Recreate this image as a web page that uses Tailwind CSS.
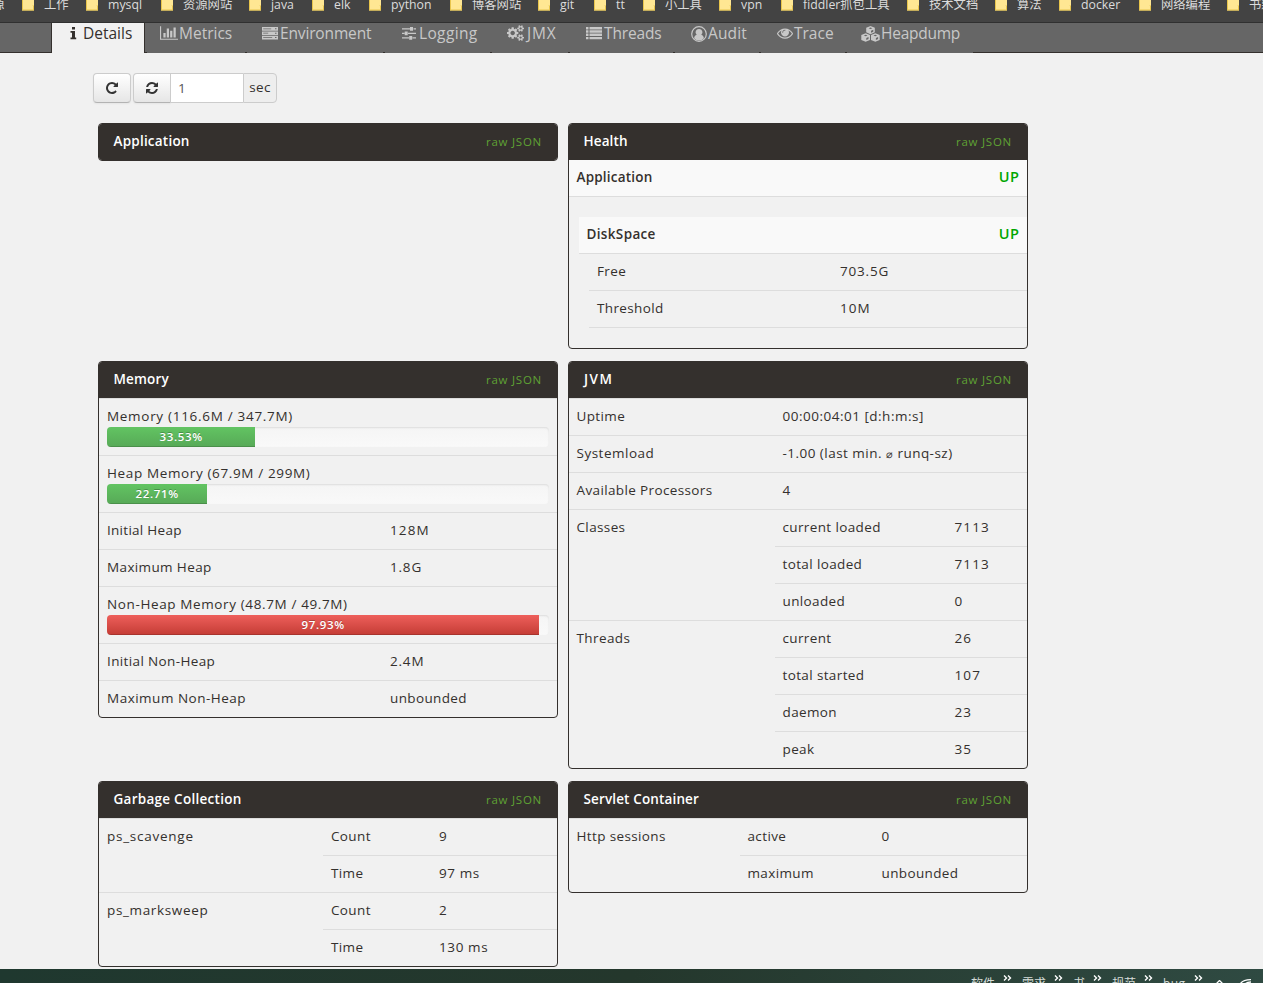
<!DOCTYPE html>
<html lang="en">
<head>
    <meta charset="UTF-8">
    <meta name="viewport" content="width=device-width, initial-scale=1.0">
    <title>Spring Boot Admin - Details</title>
    <script src="https://cdn.jsdelivr.net/npm/@tailwindcss/browser@4"></script>
</head>
<body class="h-[983px] overflow-hidden flex flex-col bg-[#f1f1f1] text-[#34302d] font-['Open_Sans','Noto_Sans_CJK_SC',sans-serif] text-[13.5px] leading-5 tracking-[0.37px]">

    <!-- folder icon shared by all bookmarks -->
    <svg class="hidden">
        <symbol id="folder" viewBox="0 0 12 14">
            <path d="M0 0h12v14H0z" fill="#ffe793"/>
            <path d="M0 0h1v14H0zM0 13h12v1H0zM10 9h2v5h-2z" fill="#e8c54c"/>
            <path d="M10 9h1v4h-1z" fill="#ffe793"/>
        </symbol>
    </svg>

    <!-- bookmarks bar -->
    <div class="h-[23px] shrink-0 overflow-hidden bg-[#434343] border-b border-[#303030] text-[12.3px] leading-[18px] text-[#dcdcdc] tracking-normal">
        <div class="flex -mt-[4px] whitespace-nowrap">
            <div class="w-[22px] shrink-0"><span class="-ml-[8px]">源</span></div>
            <div class="w-[64px] shrink-0 flex gap-[10px]"><svg class="w-3 h-[15px]"><use href="#folder"/></svg><span>工作</span></div>
            <div class="w-[75px] shrink-0 flex gap-[10px]"><svg class="w-3 h-[15px]"><use href="#folder"/></svg><span>mysql</span></div>
            <div class="w-[88px] shrink-0 flex gap-[10px]"><svg class="w-3 h-[15px]"><use href="#folder"/></svg><span>资源网站</span></div>
            <div class="w-[63px] shrink-0 flex gap-[10px]"><svg class="w-3 h-[15px]"><use href="#folder"/></svg><span>java</span></div>
            <div class="w-[57px] shrink-0 flex gap-[10px]"><svg class="w-3 h-[15px]"><use href="#folder"/></svg><span>elk</span></div>
            <div class="w-[81px] shrink-0 flex gap-[10px]"><svg class="w-3 h-[15px]"><use href="#folder"/></svg><span>python</span></div>
            <div class="w-[88px] shrink-0 flex gap-[10px]"><svg class="w-3 h-[15px]"><use href="#folder"/></svg><span>博客网站</span></div>
            <div class="w-[56px] shrink-0 flex gap-[10px]"><svg class="w-3 h-[15px]"><use href="#folder"/></svg><span>git</span></div>
            <div class="w-[49px] shrink-0 flex gap-[10px]"><svg class="w-3 h-[15px]"><use href="#folder"/></svg><span>tt</span></div>
            <div class="w-[76px] shrink-0 flex gap-[10px]"><svg class="w-3 h-[15px]"><use href="#folder"/></svg><span>小工具</span></div>
            <div class="w-[62px] shrink-0 flex gap-[10px]"><svg class="w-3 h-[15px]"><use href="#folder"/></svg><span>vpn</span></div>
            <div class="w-[126px] shrink-0 flex gap-[10px]"><svg class="w-3 h-[15px]"><use href="#folder"/></svg><span>fiddler抓包工具</span></div>
            <div class="w-[88px] shrink-0 flex gap-[10px]"><svg class="w-3 h-[15px]"><use href="#folder"/></svg><span>技术文档</span></div>
            <div class="w-[64px] shrink-0 flex gap-[10px]"><svg class="w-3 h-[15px]"><use href="#folder"/></svg><span>算法</span></div>
            <div class="w-[80px] shrink-0 flex gap-[10px]"><svg class="w-3 h-[15px]"><use href="#folder"/></svg><span>docker</span></div>
            <div class="w-[88px] shrink-0 flex gap-[10px]"><svg class="w-3 h-[15px]"><use href="#folder"/></svg><span>网络编程</span></div>
            <div class="w-[88px] shrink-0 flex gap-[10px]"><svg class="w-3 h-[15px]"><use href="#folder"/></svg><span>书籍</span></div>
        </div>
    </div>

    <!-- tabs, each closed by a short piece of the bottom line -->
    <div class="h-[30px] shrink-0 flex bg-[#666] text-[#c8c8c8] text-[15.5px] leading-[21px] tracking-normal whitespace-nowrap">
        <div class="w-[51px] border-b border-[#34302d]"></div>
        <div class="w-[94px] border-x border-[#34302d] bg-[#f1f1f1] text-[#34302d] flex">
            <svg class="w-[7px] h-[13px] ml-[18px] mt-[4px] mr-[6px]" viewBox="0 0 7 13" fill="currentColor"><path d="M2 0h3v2.600H2zM.5 4H5v6.500h1.200v1.700H.5v-1.700H2V5.700H.5z"/></svg>
            <span>Details</span>
        </div>
        <div class="w-[102px] flex">
            <i class="w-[2px] h-px self-end bg-[#34302d] mr-[13px]"></i>
            <svg class="w-[18px] h-4 mt-[2px] mr-[1px]" viewBox="0 0 2048 1792" fill="currentColor"><path d="M640 896v512h-256v-512h256zm384-512v1024h-256v-1024h256zm1024 1152v128h-2048v-1536h128v1408h1920zm-640-896v768h-256v-768h256zm384-384v1152h-256v-1152h256z"/></svg>
            <span>Metrics</span>
            <i class="w-[2px] h-px self-end bg-[#34302d] ml-auto"></i>
        </div>
        <div class="w-[138px] pl-[15px] flex">
            <svg class="w-4 h-[13px] mt-[4px] mr-[2px]" viewBox="0 0 16 13" fill="currentColor"><path fill-rule="evenodd" d="M0 0h16v3.700H0zM1.200 1.400v.8h8v-.8zM13 1.300v1h1.500v-1zM0 4.400h16v3.700H0zM1.200 5.800v.8h5v-.8zM13 5.700v1h1.500v-1zM0 8.800h16v3.700H0zM1.200 10.200v.8h9v-.8zM13 10.100v1h1.500v-1z"/></svg>
            <span class="tracking-[-0.15px]">Environment</span>
            <i class="w-[2px] h-px self-end bg-[#34302d] ml-auto"></i>
        </div>
        <div class="w-[107px] pl-[17px] flex">
            <svg class="w-[14px] h-[13px] mt-[4px] mr-[3px]" viewBox="0 0 14 13" fill="currentColor"><path d="M0 1.200h8v1.400H0zM11.500 1.200H14v1.400h-2.500zM8 0h3v3.800H8zM0 5.700h2.500v1.400H0zM6 5.700h8v1.400H6zM2.700 4.500h3v3.800h-3zM0 10.200h7v1.400H0zM10.500 10.200H14v1.400h-3.500zM7.200 9h3v3.800h-3z"/></svg>
            <span class="tracking-[0.35px]">Logging</span>
            <i class="w-[2px] h-px self-end bg-[#34302d] ml-auto"></i>
        </div>
        <div class="w-[78px] pl-[15px] flex">
            <svg class="w-[17px] h-4 mt-[2px] mr-[1px]" viewBox="0 0 1920 1792" fill="currentColor"><path d="M896 896q0-106-75-181t-181-75-181 75-75 181 75 181 181 75 181-75 75-181zm768 512q0-52-38-90t-90-38-90 38-38 90q0 53 37.500 90.500t90.500 37.500 90.500-37.500 37.500-90.500zm0-1024q0-52-38-90t-90-38-90 38-38 90q0 53 37.500 90.500t90.500 37.500 90.500-37.500 37.500-90.500zm-384 421v185q0 10-7 19.500t-16 10.500l-155 24q-11 35-32 76 34 48 90 115 7 11 7 20 0 12-7 19-23 30-82.500 89.500t-78.500 59.500q-11 0-21-7l-115-90q-37 19-77 31-11 108-23 155-7 24-30 24h-186q-11 0-20-7.500t-10-17.500l-23-153q-34-10-75-31l-118 89q-7 7-20 7-11 0-21-8-144-133-144-160 0-9 7-19 10-14 41-53t47-61q-23-44-35-82l-152-24q-10-1-17-9.500t-7-19.500v-185q0-10 7-19.500t16-10.500l155-24q11-35 32-76-34-48-90-115-7-11-7-20 0-12 7-20 22-30 82-89t79-59q11 0 21 7l115 90q34-18 77-32 11-108 23-154 7-24 30-24h186q11 0 20 7.500t10 17.500l23 153q34 10 75 31l118-89q8-7 20-7 11 0 21 8 144 133 144 160 0 8-7 19-12 16-42 54t-45 60q23 48 34 82l152 23q10 2 17 10.500t7 19.500zm640 533v140q0 16-149 31-12 27-30 52 51 113 51 138 0 4-4 7-122 71-124 71-8 0-46-47t-52-68q-20 2-30 2t-30-2q-14 21-52 68t-46 47q-2 0-124-71-4-3-4-7 0-25 51-138-18-25-30-52-149-15-149-31v-140q0-16 149-31 13-29 30-52-51-113-51-138 0-4 4-7 4-2 35-20t59-34 30-16q8 0 46 46.500t52 67.500q20-2 30-2t30 2q51-71 92-112l6-2q4 0 124 70 4 3 4 7 0 25-51 138 17 23 30 52 149 15 149 31zm0-1024v140q0 16-149 31-12 27-30 52 51 113 51 138 0 4-4 7-122 71-124 71-8 0-46-47t-52-68q-20 2-30 2t-30-2q-14 21-52 68t-46 47q-2 0-124-71-4-3-4-7 0-25 51-138-18-25-30-52-149-15-149-31v-140q0-16 149-31 13-29 30-52-51-113-51-138 0-4 4-7 4-2 35-20t59-34 30-16q8 0 46 46.500t52 67.500q20-2 30-2t30 2q51-71 92-112l6-2q4 0 124 70 4 3 4 7 0 25-51 138 17 23 30 52 149 15 149 31z"/></svg>
            <span class="pl-[2px] tracking-[0.8px]">JMX</span>
            <i class="w-[2px] h-px self-end bg-[#34302d] ml-auto"></i>
        </div>
        <div class="w-[105px] pl-4 flex">
            <svg class="w-4 h-[13px] mt-[4px] mr-[2px]" viewBox="0 0 16 13" fill="currentColor"><path d="M0 0h2.500v2.400H0zM3.500 0H16v2.400H3.500zM0 3.300h2.500v2.400H0zM3.500 3.300H16v2.400H3.500zM0 6.600h2.500V9H0zM3.500 6.600H16V9H3.500zM0 9.900h2.500v2.400H0zM3.500 9.900H16v2.400H3.500z"/></svg>
            <span class="tracking-[-0.15px]">Threads</span>
            <i class="w-[2px] h-px self-end bg-[#34302d] ml-auto"></i>
        </div>
        <div class="w-[86px] pl-4 flex">
            <svg class="w-4 h-4 mt-[3px] mr-[1px]" viewBox="0 0 16 16"><circle cx="8" cy="8" r="7.300" fill="none" stroke="currentColor" stroke-width="1.200"/><path fill="currentColor" d="M8 3a3.300 3.300 0 0 1 2.300 5.800c1.500.5 2.400 1.900 2.600 3.500A6.500 6.500 0 0 1 8 14.500a6.500 6.500 0 0 1-4.900-2.200c.2-1.600 1.100-3 2.600-3.500A3.300 3.300 0 0 1 8 3z"/></svg>
            <span class="tracking-[0.15px]">Audit</span>
            <i class="w-[2px] h-px self-end bg-[#34302d] ml-auto"></i>
        </div>
        <div class="w-[86px] pl-4 flex">
            <svg class="w-4 h-4 mt-[2px] mr-[1px]" viewBox="0 0 1792 1792" fill="currentColor"><path d="M1664 960q-152-236-381-353 61 104 61 225 0 185-131.500 316.500t-316.500 131.500-316.500-131.500-131.500-316.500q0-121 61-225-229 117-381 353 133 205 333.500 326.500t434.500 121.500 434.500-121.500 333.500-326.500zm-720-384q0-20-14-34t-34-14q-125 0-214.500 89.500t-89.500 214.500q0 20 14 34t34 14 34-14 14-34q0-86 61-147t147-61q20 0 34-14t14-34zm848 384q0 34-20 69-140 230-376.500 368.500t-499.500 138.500-499.500-139-376.500-368q-20-35-20-69t20-69q140-229 376.500-368t499.500-139 499.500 139 376.500 368q20 35 20 69z"/></svg>
            <span>Trace</span>
            <i class="w-[2px] h-px self-end bg-[#34302d] ml-auto"></i>
        </div>
        <div class="w-[126px] pl-[14px] flex">
            <svg class="w-[19px] h-4 mt-[3px] mr-[1px]" viewBox="0 0 19 16" fill="currentColor"><path fill-rule="evenodd" d="M9.500 0l4.300 1.700v4.600L9.500 8.200 5.200 6.300V1.700zM9.500 1.400L7.600 2.200l1.900.8 1.900-.8zM10 4.700v2l2.300-1V3.700zM4.700 7.300L9 9v4.900l-4.300 1.900L.3 13.900V9zM4.700 8.700L2.800 9.500l1.900.8 1.900-.8zM5.300 12.100v2l2.200-1v-2zM14.300 7.300L18.700 9v4.900l-4.400 1.900L10 13.900V9zM14.300 8.700l-1.900.8 1.900.8 1.900-.8zM14.900 12.100v2l2.200-1v-2z"/></svg>
            <span class="tracking-[-0.25px]">Heapdump</span>
        </div>
        <div class="flex-1 border-b border-[#34302d]"></div>
    </div>

    <main class="h-[916px] shrink-0 overflow-hidden pt-5">
        <!-- refresh controls -->
        <div class="flex ml-[93px] h-[30px]">
            <button class="w-[38px] pr-px mr-[2px] flex items-center justify-center rounded border border-[#ccc] border-b-[#b3b3b3] bg-linear-to-b from-white to-[#e6e6e6] shadow-xs">
                <svg class="w-[14px] h-[14px]" viewBox="0 0 1792 1792" fill="#333"><path d="M1664 256v448q0 26-19 45t-45 19h-448q-42 0-59-40-17-39 14-69l138-138q-148-137-349-137-104 0-198.500 40.500t-163.500 109.500-109.500 163.500-40.500 198.500 40.500 198.500 109.500 163.500 163.500 109.500 198.500 40.500q119 0 225-52t179-147q7-10 23-12 15 0 25 9l137 138q9 8 9.500 20.500t-7.500 22.500q-109 132-264 204.500t-327 72.500q-156 0-298-61t-245-164-164-245-61-298 61-298 164-245 245-164 298-61q147 0 284.500 55.500t244.500 156.500l130-129q29-31 70-14 39 17 39 59z"/></svg>
            </button>
            <button class="w-[38px] flex items-center justify-center rounded-l border border-[#ccc] border-b-[#b3b3b3] bg-linear-to-b from-white to-[#e6e6e6] shadow-xs">
                <svg class="w-[14px] h-[14px]" viewBox="0 0 1792 1792" fill="#333"><path d="M1639 1056q0 5-1 7-64 268-268 434.500t-478 166.500q-146 0-282.500-55t-243.500-157l-129 129q-19 19-45 19t-45-19-19-45v-448q0-26 19-45t45-19h448q26 0 45 19t19 45-19 45l-137 137q71 66 161 102t187 36q134 0 250-65t186-179q11-17 53-117 8-23 30-23h192q13 0 22.500 9.500t9.500 22.500zm25-800v448q0 26-19 45t-45 19h-448q-26 0-45-19t-19-45 19-45l138-138q-148-137-349-137-134 0-250 65t-186 179q-11 17-53 117-8 23-30 23h-199q-13 0-22.500-9.500t-9.500-22.500v-7q65-268 270-434.500t480-166.500q146 0 284 55.500t245 156.500l130-129q19-19 45-19t45 19 19 45z"/></svg>
            </button>
            <div class="w-[72px] bg-white border-y border-[#ccc] pl-[7px] leading-7 text-[#555]">1</div>
            <div class="w-[34px] rounded-r border border-[#ccc] bg-[#eee] text-center leading-[26px] tracking-[0.3px]">sec</div>
        </div>

        <div class="ml-[98px] mt-5 w-[930px] grid grid-cols-2 gap-x-[10px] gap-y-3 items-start">
            <!-- Application -->
            <section class="border border-[#34302d] rounded overflow-hidden">
                <div class="h-9 px-[15px] flex items-center justify-between bg-[#34302d]"><h2 class="pb-[2px] -ml-[0.5px] font-semibold text-white tracking-[0.22px]">Application</h2><a class="text-[11.5px] tracking-[0.75px] text-[#5fa134]">raw JSON</a></div>
            </section>

            <!-- Health -->
            <section class="border border-[#34302d] rounded overflow-hidden">
                <div class="h-9 px-[15px] flex items-center justify-between bg-[#34302d]"><h2 class="pb-[2px] -ml-[0.5px] font-semibold text-white tracking-[0.12px]">Health</h2><a class="text-[11.5px] tracking-[0.75px] text-[#5fa134]">raw JSON</a></div>
                <div class="h-[37px] px-[7.5px] pb-[2px] flex items-center justify-between bg-[#f9f9f9] border-b border-[#ddd] font-semibold tracking-[0.2px]"><span>Application</span><span class="text-[#00a600] text-[14.5px] tracking-[0.5px]">UP</span></div>
                <div class="mt-5 ml-[10px] mb-5">
                    <div class="h-[37px] px-[7.5px] pb-[2px] flex items-center justify-between bg-[#f9f9f9] border-b border-[#ddd] font-semibold tracking-[0.35px]"><span>DiskSpace</span><span class="text-[#00a600] text-[14.5px] tracking-[0.5px]">UP</span></div>
                    <div class="ml-[10px]">
                        <div class="h-[37px] px-2 pb-[2px] flex items-center border-b border-[#ddd]"><span class="w-[243px]">Free</span><span class="tracking-[0.8px]">703.5G</span></div>
                        <div class="h-[37px] px-2 pb-[2px] flex items-center border-b border-[#ddd]"><span class="w-[243px]">Threshold</span><span class="tracking-[1px]">10M</span></div>
                    </div>
                </div>
            </section>

            <!-- Memory -->
            <section class="border border-[#34302d] rounded overflow-hidden">
                <div class="h-9 px-[15px] flex items-center justify-between bg-[#34302d]"><h2 class="pb-[2px] -ml-[0.5px] font-semibold text-white tracking-[0.15px]">Memory</h2><a class="text-[11.5px] tracking-[0.75px] text-[#5fa134]">raw JSON</a></div>
                <div class="px-2 pt-[7px] pb-2 border-t border-[#ddd]">
                    <div class="mb-px tracking-[0.7px]">Memory (116.6M / 347.7M)</div>
                    <div class="h-5 rounded overflow-hidden bg-linear-to-b from-[#f5f5f5] to-[#f9f9f9] inset-shadow-[0_1px_2px_rgba(0,0,0,0.1)]">
                        <div class="h-5 bg-linear-to-b from-[#62c462] to-[#57a957] inset-shadow-[0_-1px_0_rgba(0,0,0,0.15)] text-center text-[11.5px] font-semibold tracking-[0.65px] text-white text-shadow-[0_-1px_0_rgba(0,0,0,0.25)]" style="width: 33.53%">33.53%</div>
                    </div>
                </div>
                <div class="px-2 pt-[7px] pb-2 border-t border-[#ddd]">
                    <div class="mb-px tracking-[0.63px]">Heap Memory (67.9M / 299M)</div>
                    <div class="h-5 rounded overflow-hidden bg-linear-to-b from-[#f5f5f5] to-[#f9f9f9] inset-shadow-[0_1px_2px_rgba(0,0,0,0.1)]">
                        <div class="h-5 bg-linear-to-b from-[#62c462] to-[#57a957] inset-shadow-[0_-1px_0_rgba(0,0,0,0.15)] text-center text-[11.5px] font-semibold tracking-[0.65px] text-white text-shadow-[0_-1px_0_rgba(0,0,0,0.25)]" style="width: 22.71%">22.71%</div>
                    </div>
                </div>
                <div class="px-2 pt-[7px] pb-[9px] flex border-t border-[#ddd]"><span class="w-[283px] tracking-[0.28px]">Initial Heap</span><span class="tracking-[1.1px]">128M</span></div>
                <div class="px-2 pt-[7px] pb-[9px] flex border-t border-[#ddd]"><span class="w-[283px]">Maximum Heap</span><span class="tracking-[0.8px]">1.8G</span></div>
                <div class="px-2 pt-[7px] pb-2 border-t border-[#ddd]">
                    <div class="mb-px tracking-[0.62px]">Non-Heap Memory (48.7M / 49.7M)</div>
                    <div class="h-5 rounded overflow-hidden bg-linear-to-b from-[#f5f5f5] to-[#f9f9f9] inset-shadow-[0_1px_2px_rgba(0,0,0,0.1)]">
                        <div class="h-5 bg-linear-to-b from-[#ee5f5b] to-[#c43c35] inset-shadow-[0_-1px_0_rgba(0,0,0,0.15)] text-center text-[11.5px] font-semibold tracking-[0.65px] text-white text-shadow-[0_-1px_0_rgba(0,0,0,0.25)]" style="width: 97.8%">97.93%</div>
                    </div>
                </div>
                <div class="px-2 pt-[7px] pb-[9px] flex border-t border-[#ddd]"><span class="w-[283px]">Initial Non-Heap</span><span class="tracking-[0.8px]">2.4M</span></div>
                <div class="px-2 pt-[7px] pb-[9px] flex border-t border-[#ddd]"><span class="w-[283px] tracking-[0.5px]">Maximum Non-Heap</span><span>unbounded</span></div>
            </section>

            <!-- JVM -->
            <section class="border border-[#34302d] rounded overflow-hidden">
                <div class="h-9 px-[15px] flex items-center justify-between bg-[#34302d]"><h2 class="pb-[2px] font-semibold text-white tracking-[1.5px]">JVM</h2><a class="text-[11.5px] tracking-[0.75px] text-[#5fa134]">raw JSON</a></div>
                <div class="px-[7.5px] pt-[7px] pb-[9px] flex border-t border-[#ddd]"><span class="w-[206px]">Uptime</span><span class="tracking-[0.5px]">00:00:04:01 [d:h:m:s]</span></div>
                <div class="h-[37px] px-[7.5px] pt-[7px] flex border-t border-[#ddd]"><span class="w-[206px] tracking-[0.5px]">Systemload</span><span class="tracking-[0.47px]">-1.00 (last min. <span class="text-[11px] leading-none">⌀</span> runq-sz)</span></div>
                <div class="px-[7.5px] pt-[7px] pb-[9px] flex border-t border-[#ddd]"><span class="w-[206px]">Available Processors</span><span>4</span></div>
                <div class="flex border-t border-[#ddd]">
                    <div class="w-[206px] px-[7.5px] pt-[7px] pb-[9px]">Classes</div>
                    <div class="flex-1 divide-y divide-[#ddd]">
                        <div class="px-[7.5px] pt-[7px] pb-[9px] flex"><span class="w-[172px]">current loaded</span><span class="tracking-[1.1px]">7113</span></div>
                        <div class="px-[7.5px] pt-[7px] pb-[9px] flex"><span class="w-[172px]">total loaded</span><span class="tracking-[1.1px]">7113</span></div>
                        <div class="px-[7.5px] pt-[7px] pb-[9px] flex"><span class="w-[172px]">unloaded</span><span>0</span></div>
                    </div>
                </div>
                <div class="flex border-t border-[#ddd]">
                    <div class="w-[206px] px-[7.5px] pt-[7px] pb-[9px] tracking-[0.4px]">Threads</div>
                    <div class="flex-1 divide-y divide-[#ddd]">
                        <div class="px-[7.5px] pt-[7px] pb-[9px] flex"><span class="w-[172px]">current</span><span class="tracking-[1.1px]">26</span></div>
                        <div class="px-[7.5px] pt-[7px] pb-[9px] flex"><span class="w-[172px]">total started</span><span class="tracking-[1.1px]">107</span></div>
                        <div class="px-[7.5px] pt-[7px] pb-[9px] flex"><span class="w-[172px]">daemon</span><span class="tracking-[1.1px]">23</span></div>
                        <div class="px-[7.5px] pt-[7px] pb-[9px] flex"><span class="w-[172px]">peak</span><span class="tracking-[1.1px]">35</span></div>
                    </div>
                </div>
            </section>

            <!-- Garbage Collection -->
            <section class="border border-[#34302d] rounded overflow-hidden">
                <div class="h-9 px-[15px] flex items-center justify-between bg-[#34302d]"><h2 class="pb-[2px] -ml-[0.5px] font-semibold text-white tracking-[0.27px]">Garbage Collection</h2><a class="text-[11.5px] tracking-[0.75px] text-[#5fa134]">raw JSON</a></div>
                <div class="flex border-t border-[#ddd]">
                    <div class="w-[224px] px-2 pt-[7px] pb-[9px] tracking-[0.75px]">ps_scavenge</div>
                    <div class="flex-1 divide-y divide-[#ddd]">
                        <div class="px-2 pt-[7px] pb-[9px] flex"><span class="w-[108px]">Count</span><span>9</span></div>
                        <div class="px-2 pt-[7px] pb-[9px] flex"><span class="w-[108px]">Time</span><span class="tracking-[0.6px]">97 ms</span></div>
                    </div>
                </div>
                <div class="flex border-t border-[#ddd]">
                    <div class="w-[224px] px-2 pt-[7px] pb-[9px] tracking-[0.65px]">ps_marksweep</div>
                    <div class="flex-1 divide-y divide-[#ddd]">
                        <div class="px-2 pt-[7px] pb-[9px] flex"><span class="w-[108px]">Count</span><span>2</span></div>
                        <div class="px-2 pt-[7px] pb-[9px] flex"><span class="w-[108px]">Time</span><span class="tracking-[0.6px]">130 ms</span></div>
                    </div>
                </div>
            </section>

            <!-- Servlet Container -->
            <section class="border border-[#34302d] rounded overflow-hidden">
                <div class="h-9 px-[15px] flex items-center justify-between bg-[#34302d]"><h2 class="pb-[2px] -ml-[0.5px] font-semibold text-white tracking-[0.14px]">Servlet Container</h2><a class="text-[11.5px] tracking-[0.75px] text-[#5fa134]">raw JSON</a></div>
                <div class="flex border-t border-[#ddd]">
                    <div class="w-[171px] px-[7.5px] pt-[7px] pb-[9px]">Http sessions</div>
                    <div class="flex-1 divide-y divide-[#ddd]">
                        <div class="px-[7.5px] pt-[7px] pb-[9px] flex"><span class="w-[134px]">active</span><span>0</span></div>
                        <div class="px-[7.5px] pt-[7px] pb-[9px] flex"><span class="w-[134px]">maximum</span><span>unbounded</span></div>
                    </div>
                </div>
            </section>
        </div>
    </main>

    <!-- taskbar -->
    <footer class="h-[14px] shrink-0 overflow-hidden flex bg-linear-to-r from-[#1f382f] via-[#24372c] to-[#2f4a42] pl-[971px] text-[12px] leading-[18px] tracking-normal text-[#d5dcd8] whitespace-nowrap">
        <span class="w-[32px] pt-[6px]">软件</span><svg class="w-[9px] h-[6px] mt-[6px] mr-[10px]" viewBox="0 0 9 6" fill="none" stroke="#fff" stroke-width="1.400"><path d="M1 .5L3.500 3 1 5.500M5 .5L7.500 3 5 5.500"/></svg>
        <span class="w-[32px] pt-[6px]">需求</span><svg class="w-[9px] h-[6px] mt-[6px] mr-[10px]" viewBox="0 0 9 6" fill="none" stroke="#fff" stroke-width="1.400"><path d="M1 .5L3.500 3 1 5.500M5 .5L7.500 3 5 5.500"/></svg>
        <span class="w-[20px] pt-[6px]">书</span><svg class="w-[9px] h-[6px] mt-[6px] mr-[10px]" viewBox="0 0 9 6" fill="none" stroke="#fff" stroke-width="1.400"><path d="M1 .5L3.500 3 1 5.500M5 .5L7.500 3 5 5.500"/></svg>
        <span class="w-[32px] pt-[6px]">规范</span><svg class="w-[9px] h-[6px] mt-[6px] mr-[10px]" viewBox="0 0 9 6" fill="none" stroke="#fff" stroke-width="1.400"><path d="M1 .5L3.500 3 1 5.500M5 .5L7.500 3 5 5.500"/></svg>
        <span class="w-[31px] pt-[6px] tracking-[0.4px]">bug</span><svg class="w-[9px] h-[6px] mt-[6px] mr-[12px]" viewBox="0 0 9 6" fill="none" stroke="#fff" stroke-width="1.400"><path d="M1 .5L3.500 3 1 5.500M5 .5L7.500 3 5 5.500"/></svg>
        <svg class="w-[9px] h-[5px] mt-[11px] mr-[16px]" viewBox="0 0 9 5" fill="none" stroke="#fff" stroke-width="1.300"><path d="M.5 4.500l4-4 4 4"/></svg>
        <svg class="w-[12px] h-[5px] mt-[10px]" viewBox="0 0 12 5" fill="none" stroke="#fff" stroke-width="1.300"><path d="M0 5Q3 .6 11 .7M5 5Q7 3 11 3"/></svg>
    </footer>
</body>
</html>
